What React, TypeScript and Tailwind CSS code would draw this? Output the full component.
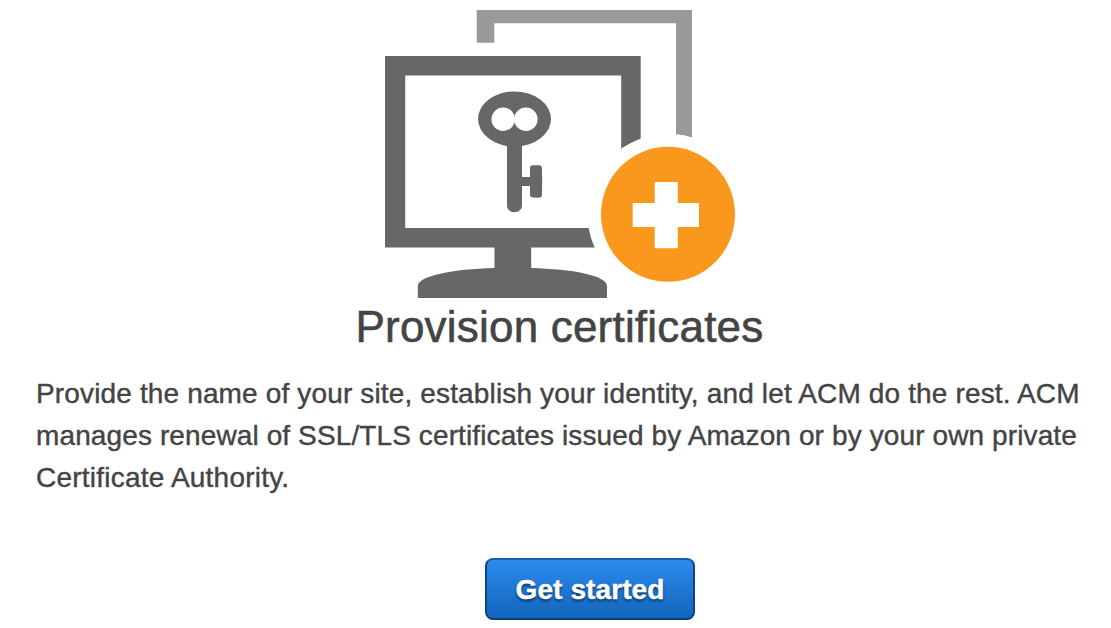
function ProvisionIcon() {
  return (
    <svg width="350" height="288" viewBox="385 10 350 288" aria-hidden="true" className="block shrink-0">
      <path fill="#999999" d="M476.7 10H692V150H676V23.3H494.3V42.8H476.7Z" />
      <path fill="#676767" fillRule="evenodd" d="M385 56H640.7V247.5H385ZM405.2 75.6V228H621.2V75.6Z" />
      <circle cx="668" cy="214.3" r="80.5" fill="#fff" />
      <path fill="#676767" d="M494.5 247H531.2V268C572 269 607 275.5 607 286V298H417.8V286C417.8 276 453 269 494.5 268Z" />
      <g fill="#676767">
        <ellipse cx="514.5" cy="119" rx="36.5" ry="27.6" />
        <path d="M507 142H522V177H530V168Q530 165.3 533 165.2H539Q541.9 165.3 541.9 168L542.2 181.5L541.9 195Q541.9 197.8 539 197.8L533 197.6Q530 197.3 530 195V186H522V205.5C522 209.5 518.6 212.2 514.5 212.2S507 209.5 507 205.5Z" />
      </g>
      <circle cx="503.2" cy="119.3" r="11.7" fill="#fff" />
      <circle cx="525.9" cy="119.3" r="11.7" fill="#fff" />
      <ellipse cx="668" cy="214.3" rx="67" ry="67.5" fill="#f9981d" />
      <path fill="#fff" d="M654.7 182H677.8V203H699V227H677.8V248.2H654.7V227H632.7V203H654.7Z" />
    </svg>
  );
}

export default function App() {
  return (
    <main className="flex h-[628px] w-[1111px] flex-col overflow-hidden bg-white pt-[10px] font-['Liberation_Sans',Arial,sans-serif] text-[#444444]">
      <div className="flex justify-center pl-[9px]">
        <ProvisionIcon />
      </div>
      <h1 className="pl-[8px] text-center text-[44px] leading-[58px] tracking-[0.2px] whitespace-nowrap [-webkit-text-stroke:0.6px_#444444]">
        Provision certificates
      </h1>
      <p className="mt-[17px] pl-[36px] text-[28px] leading-[42px] whitespace-nowrap [-webkit-text-stroke:0.4px_#444444]">
        <span className="block tracking-[0.147px]">Provide the name of your site, establish your identity, and let ACM do the rest. ACM</span>
        <span className="block tracking-[0.115px]">manages renewal of SSL/TLS certificates issued by Amazon or by your own private</span>
        <span className="block tracking-[0.22px]">Certificate Authority.</span>
      </p>
      <div className="mt-[59px] flex justify-center pl-[69px]">
        <button
          type="button"
          className="h-[62px] w-[210px] rounded-[8px] border-2 border-t-[#1460b0] border-r-[#0c4584] border-b-[#0b3f7a] border-l-[#0c4584] bg-linear-to-b from-[#2c8cee] to-[#1264bb] bg-origin-border pt-px text-[28px] font-bold tracking-[0.1px] whitespace-nowrap text-white [-webkit-text-stroke:0.4px_#ffffff] [text-shadow:0_2px_3px_rgba(0,0,0,0.6)]"
        >
          Get started
        </button>
      </div>
    </main>
  );
}
